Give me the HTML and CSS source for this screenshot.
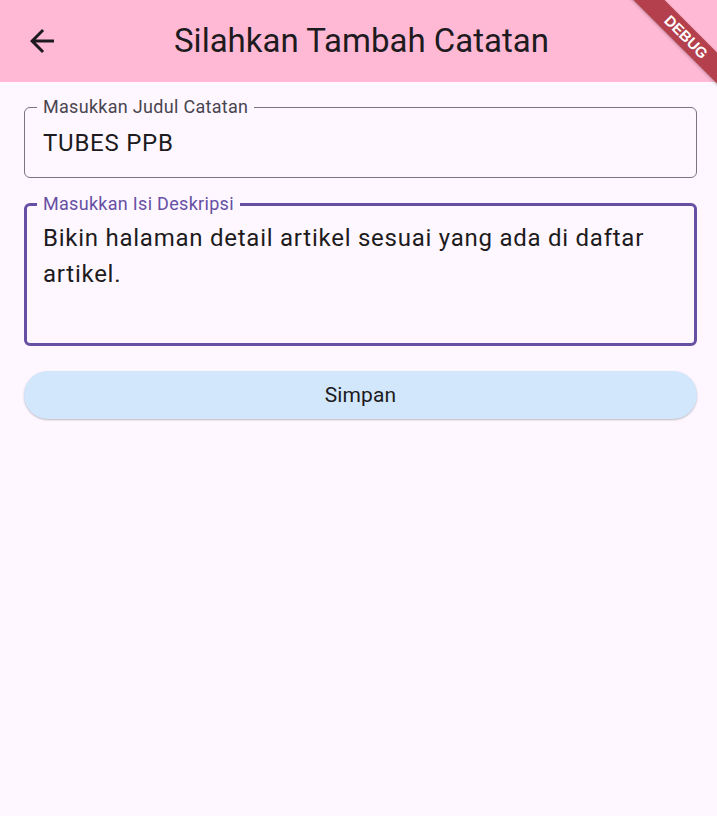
FILE: index.html
```html
<!DOCTYPE html>
<html lang="id">
<head>
<meta charset="utf-8">
<title>Silahkan Tambah Catatan</title>
<link rel="stylesheet" href="styles.css">
</head>
<body>
<header class="appbar">
  <div class="lead">
    <svg class="back" viewBox="0 0 24 24" width="36" height="36" aria-hidden="true">
      <path d="M20 11H7.83l5.59-5.59L12 4l-8 8 8 8 1.41-1.41L7.83 13H20v-2z" fill="#1D1B20"/>
    </svg>
  </div>
  <h1 class="title">Silahkan Tambah Catatan</h1>
  <div class="lead"></div>
</header>
<div class="banner"><span>DEBUG</span></div>
<main class="content">
  <fieldset class="field">
    <legend>Masukkan Judul Catatan</legend>
    <div class="value">TUBES PPB</div>
  </fieldset>
  <fieldset class="field focused">
    <legend>Masukkan Isi Deskripsi</legend>
    <div class="value multi">Bikin halaman detail artikel sesuai yang ada di daftar artikel.</div>
  </fieldset>
  <button class="btn">Simpan</button>
</main>
</body>
</html>
```
FILE: styles.css
```css
* { box-sizing: border-box; }
html, body { margin: 0; padding: 0; }
body {
  background: #FEF7FF;
  font-family: Roboto, "Noto Sans", sans-serif;
  color: #1D1B20;
  width: 717px;
  height: 816px;
  overflow: hidden;
  position: relative;
}
.appbar {
  height: 82px;
  background: #FFB9D5;
  display: flex;
  align-items: center;
}
.lead {
  width: 84px;
  flex: none;
  display: flex;
  align-items: center;
  padding-left: 24px;
}
.back { display: block; }
.title {
  flex: 1;
  margin: 0;
  padding-left: 6px;
  text-align: center;
  font-weight: 400;
  font-size: 33px;
  color: #1D1B20;
  line-height: 40px;
}
.banner {
  position: absolute;
  top: 0;
  right: 0;
  width: 100px;
  height: 100px;
  overflow: hidden;
  pointer-events: none;
}
.banner span {
  position: absolute;
  top: 26px;
  right: -44px;
  width: 150px;
  height: 22px;
  background: #B3404C;
  color: #fff;
  font-family: "Liberation Sans", Arial, sans-serif;
  font-weight: 700;
  font-size: 15px;
  line-height: 22px;
  text-align: center;
  transform: rotate(45deg);
  box-shadow: 0 1px 3px rgba(0,0,0,0.25);
}
.content {
  padding: 0 20px 0 24px;
  display: flex;
  flex-direction: column;
}
.field {
  margin: 14px 0 0;
  width: 673px;
  height: 82px;
  border: 1px solid #79747E;
  border-radius: 6px;
  padding: 0 0 0 18px;
  min-width: 0;
}
.field legend {
  font-size: 18px;
  color: #49454F;
  padding: 0 6px;
  margin-left: -6px;
  line-height: 22px;
  letter-spacing: 0.3px;
}
.field .value {
  font-size: 24px;
  line-height: 36px;
  letter-spacing: 0.75px;
  color: #1D1B20;
  padding-top: 7px;
}
.field.focused {
  margin-top: 15px;
  border: 3px solid #6750A4;
  height: 153px;
  padding-left: 16px;
}
.field.focused legend { color: #6750A4; }
.value.multi { padding-top: 5px; }
.btn {
  margin-top: 25px;
  width: 673px;
  height: 48px;
  border: none;
  border-radius: 24px;
  background: #D2E7FC;
  color: #1D1B20;
  font-family: Roboto, sans-serif;
  font-size: 21px;
  letter-spacing: 0.15px;
  box-shadow: 0 1px 2px rgba(0,0,0,0.25);
}
```
